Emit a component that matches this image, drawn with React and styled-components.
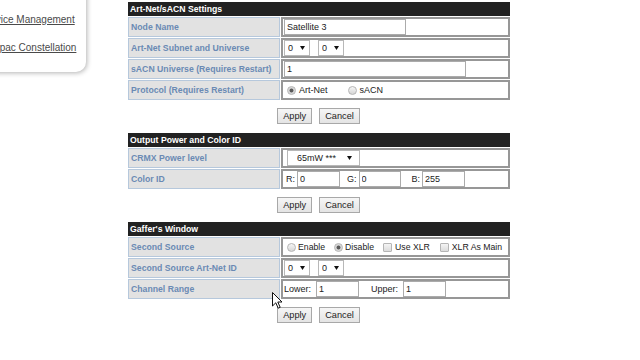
import React from 'react';
import styled, { createGlobalStyle } from 'styled-components';

const Global = createGlobalStyle`
  html, body { margin: 0; padding: 0; background: #fff; }
  body {
    font-family: "Liberation Sans", Arial, sans-serif;
    width: 640px; height: 360px; overflow: hidden;
  }
`;

const Page = styled.div`
  position: relative;
  display: flex;
  align-items: flex-start;
  width: 640px;
  height: 360px;
  overflow: hidden;
`;

const SidePanel = styled.nav`
  flex: none;
  box-sizing: border-box;
  width: 103px;
  height: 84px;
  margin-left: -17px;
  margin-top: -12px;
  padding-top: 26px;
  background: #fff;
  border-radius: 0 0 10px 0;
  box-shadow: 1px 1px 5px rgba(0, 0, 0, 0.3);
  display: flex;
  flex-direction: column;
  gap: 16px;
`;

const NavLink = styled.a`
  display: block;
  font-size: 10px;
  line-height: 12px;
  color: #4a4a4a;
  text-decoration: underline;
  white-space: nowrap;
`;

const Main = styled.main`
  flex: none;
  margin-left: 42px;
  padding-top: 2px;
  width: 382px;
  display: flex;
  flex-direction: column;
`;

const Section = styled.section`
  display: grid;
  grid-template-columns: 152px 229px;
  column-gap: 1px;
  row-gap: 1px;
`;

const Header = styled.div`
  grid-column: 1 / -1;
  height: 14px;
  line-height: 14px;
  background: #222;
  color: #fff;
  font-weight: bold;
  font-size: 8.7px;
  padding-left: 2px;
`;

const Label = styled.div`
  box-sizing: border-box;
  height: 20px;
  border: 1px solid #b6c8dc;
  background: #e2e2e2;
  color: #6a8ab4;
  font-weight: bold;
  font-size: 8.7px;
  padding: 0 2px;
  display: flex;
  align-items: center;
  white-space: nowrap;
`;

const Value = styled.div`
  box-sizing: border-box;
  height: 20px;
  border: 2px solid #979797;
  background: #fff;
  display: flex;
  align-items: center;
  padding-left: ${p => p.$pad ?? 1}px;
  font-size: 9px;
  color: #222;
  white-space: nowrap;
`;

const TextInput = styled.input`
  box-sizing: border-box;
  height: 16px;
  width: ${p => p.$w}px;
  margin: 0;
  border: 1px solid #ababab;
  padding: 0 2px;
  font-family: "Liberation Sans", Arial, sans-serif;
  font-size: 9px;
  color: #222;
  background: #fff;
  outline: none;
`;

const SelectWrap = styled.span`
  position: relative;
  display: inline-flex;
  flex: none;
  margin-left: ${p => p.$ml ?? 0}px;
`;

const Select = styled.select`
  appearance: none;
  box-sizing: border-box;
  height: 16px;
  width: ${p => p.$w}px;
  margin: 0;
  border: 1px solid #b8b8b8;
  border-radius: 0;
  background: #fff;
  padding: 0 0 0 ${p => p.$indent ?? 3}px;
  font-family: "Liberation Sans", Arial, sans-serif;
  font-size: 9px;
  color: #222;
  outline: none;
`;

const Caret = styled.svg`
  position: absolute;
  right: ${p => p.$r ?? 5}px;
  top: 6px;
  width: 5px;
  height: 4px;
  pointer-events: none;
`;

const Choice = styled.label`
  display: inline-flex;
  align-items: center;
  gap: ${p => p.$gap ?? 3}px;
  margin-left: ${p => p.$ml ?? 0}px;
  font-size: ${p => p.$fs ?? 9}px;
  color: #222;
`;

const Radio = styled.input.attrs({ type: 'radio' })`
  appearance: none;
  margin: 0;
  flex: none;
  box-sizing: border-box;
  width: 9px;
  height: 9px;
  border-radius: 50%;
  border: 1px solid #b5b5b5;
  background: linear-gradient(#f6f6f6, #d6d6d6);
  &:checked {
    background: radial-gradient(circle, #5a5a5a 0 1.6px, #d0d0d0 2.3px, #ececec 100%);
  }
`;

const Check = styled.input.attrs({ type: 'checkbox' })`
  appearance: none;
  margin: 0;
  flex: none;
  box-sizing: border-box;
  width: 9px;
  height: 9px;
  border-radius: 1px;
  border: 1px solid #b5b5b5;
  background: linear-gradient(#f4f4f4, #dcdcdc);
`;

const FieldLabel = styled.span`
  margin-left: ${p => p.$ml ?? 0}px;
  margin-right: ${p => p.$mr ?? 3}px;
`;

const Buttons = styled.div`
  display: flex;
  justify-content: center;
  gap: 7px;
  margin: 8px 0 9px;
  padding-right: 1px;
`;

const Button = styled.button`
  box-sizing: border-box;
  height: 16px;
  padding: 0 5px;
  margin: 0;
  border: 1px solid #a8a8a8;
  border-radius: 0;
  background: linear-gradient(#f6f6f6, #e4e4e4);
  font-family: "Liberation Sans", Arial, sans-serif;
  font-size: 9.2px;
  color: #222;
`;

const Pointer = styled.svg`
  position: absolute;
  left: 272px;
  top: 292px;
  width: 11px;
  height: 17px;
`;

function Dropdown({ value, w = 26, indent, ml, r }) {
  return (
    <SelectWrap $ml={ml}>
      <Select $w={w} $indent={indent} defaultValue={value}>
        <option value={value}>{value}</option>
      </Select>
      <Caret $r={r} viewBox="0 0 5 4"><path d="M0 0H5L2.5 4Z" fill="#111" /></Caret>
    </SelectWrap>
  );
}

function ActionRow() {
  return (
    <Buttons>
      <Button type="button">Apply</Button>
      <Button type="button">Cancel</Button>
    </Buttons>
  );
}

export default function App() {
  return (
    <>
      <Global />
      <Page>
        <SidePanel>
          <NavLink href="#">Device Management</NavLink>
          <NavLink href="#">Skypac Constellation</NavLink>
        </SidePanel>
        <Main>
          <Section>
            <Header>Art-Net/sACN Settings</Header>
            <Label>Node Name</Label>
            <Value><TextInput $w={122} defaultValue="Satellite 3" /></Value>
            <Label>Art-Net Subnet and Universe</Label>
            <Value>
              <Dropdown value="0" />
              <Dropdown value="0" ml={8} />
            </Value>
            <Label>sACN Universe (Requires Restart)</Label>
            <Value><TextInput $w={182} defaultValue="1" /></Value>
            <Label>Protocol (Requires Restart)</Label>
            <Value $pad={4}>
              <Choice><Radio name="proto" defaultChecked />Art-Net</Choice>
              <Choice $ml={20}><Radio name="proto" />sACN</Choice>
            </Value>
          </Section>
          <ActionRow />

          <Section>
            <Header>Output Power and Color ID</Header>
            <Label>CRMX Power level</Label>
            <Value $pad={4}>
              <Dropdown value="65mW ***" w={73} indent={9} r={8} />
            </Value>
            <Label>Color ID</Label>
            <Value $pad={3}>
              <FieldLabel $mr={2}>R:</FieldLabel>
              <TextInput $w={43} defaultValue="0" />
              <FieldLabel $ml={7} $mr={2}>G:</FieldLabel>
              <TextInput $w={42} defaultValue="0" />
              <FieldLabel $ml={11} $mr={2}>B:</FieldLabel>
              <TextInput $w={43} defaultValue="255" />
            </Value>
          </Section>
          <ActionRow />

          <Section>
            <Header>Gaffer&apos;s Window</Header>
            <Label>Second Source</Label>
            <Value $pad={4}>
              <Choice $fs={8.7} $gap={2}><Radio name="src" />Enable</Choice>
              <Choice $fs={8.7} $gap={2} $ml={9}><Radio name="src" defaultChecked />Disable</Choice>
              <Choice $fs={8.7} $ml={9}><Check />Use XLR</Choice>
              <Choice $fs={8.7} $ml={10}><Check />XLR As Main</Choice>
            </Value>
            <Label>Second Source Art-Net ID</Label>
            <Value>
              <Dropdown value="0" />
              <Dropdown value="0" ml={8} />
            </Value>
            <Label>Channel Range</Label>
            <Value>
              <FieldLabel $mr={5}>Lower:</FieldLabel>
              <TextInput $w={43} defaultValue="1" />
              <FieldLabel $ml={12} $mr={5}>Upper:</FieldLabel>
              <TextInput $w={43} defaultValue="1" />
            </Value>
          </Section>
          <ActionRow />
        </Main>
        <Pointer viewBox="0 0 11 17">
          <path d="M0.5 0.5V14L3.8 10.8L6.2 16.2L8.2 15.3L5.8 10H10Z" fill="#fff" stroke="#111" strokeWidth="1" strokeLinejoin="round" />
        </Pointer>
      </Page>
    </>
  );
}
